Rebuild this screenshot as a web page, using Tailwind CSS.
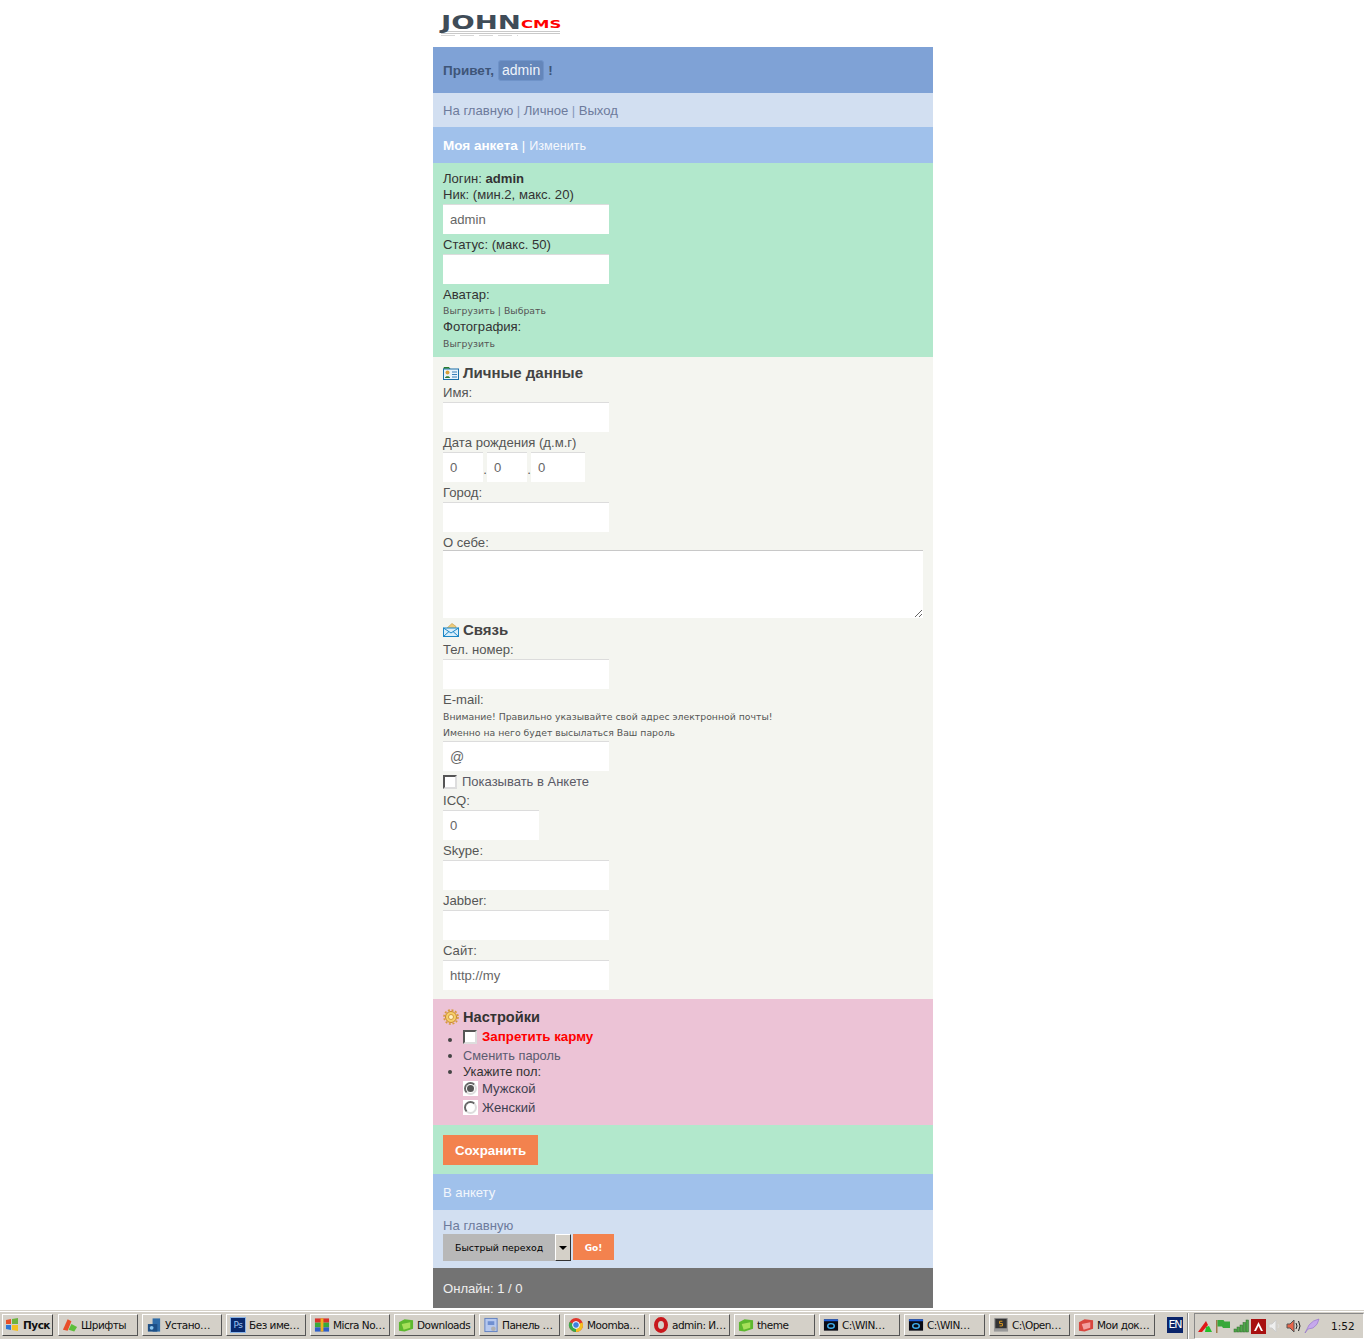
<!DOCTYPE html>
<html lang="ru">
<head>
  <meta charset="UTF-8">
  <title>JohnCMS - Моя анкета</title>
  <script src="https://cdn.jsdelivr.net/npm/@tailwindcss/browser@4"></script>
</head>
<body class="bg-white h-screen overflow-hidden flex flex-col font-['Liberation_Sans',Arial,sans-serif] text-[13.1px] leading-[16px] text-[#444]">

  <div class="flex-1 min-h-0">
    <div class="w-[500px] ml-[433px]">

      <!-- Logo -->
      <div class="h-[47px] pl-[8px] pt-[14px]">
        <div class="flex items-end h-[16px] w-[121px]">
          <span class="w-[80px] text-[20px] leading-[16px] font-bold font-['DejaVu_Sans',sans-serif] text-[#3f4c58] origin-left scale-x-[1.38]">JOHN</span>
          <span class="text-[11px] leading-[10px] font-bold font-['DejaVu_Sans',sans-serif] text-[#f00] origin-left scale-x-[1.5]">CMS</span>
        </div>
        <div class="w-[119px] h-[3px] mt-[1px] bg-[repeating-linear-gradient(to_bottom,#c9c9c9_0,#c9c9c9_1px,#fff_1px,#fff_2px)]"></div>
        <div class="w-[77px] h-[1px] mt-[1px] bg-[repeating-linear-gradient(to_right,#d6d6d6_0,#d6d6d6_14px,#fff_14px,#fff_19px)]"></div>
      </div>

      <!-- Header -->
      <div class="h-[46px] bg-[#7fa2d6] flex items-center px-[10px] text-[13.5px] font-bold text-[#3e5578]">
        <span class="pt-[2px]">Привет,</span>
        <span class="ml-[4px] h-[21px] px-[3px] flex items-center bg-[#6486ba] border border-[#6f93c9] rounded-[3px] text-[14px] font-normal text-[#eef3fb]">admin</span>
        <span class="ml-[4px] pt-[2px]">!</span>
      </div>

      <!-- Nav -->
      <div class="h-[34px] bg-[#d2dff1] flex items-center px-[10px] pt-[2px] text-[#6d7b9c]">
        На главную <span class="mx-[3.500px] text-[#8798bb]">|</span> Личное <span class="mx-[3.500px] text-[#8798bb]">|</span> Выход
      </div>

      <!-- Title -->
      <div class="h-[36px] bg-[#a0c1eb] flex items-center px-[10px] pt-[2px] text-white">
        <b class="text-[13.5px]">Моя анкета</b><span class="mx-[4px]">|</span><span class="text-[12.6px] text-[#f5f8fd]">Изменить</span>
      </div>

      <!-- Login block -->
      <div class="h-[194px] bg-[#b2e8cc] px-[10px] pt-[7px] text-[#333]">
        <div class="h-[16px] leading-[17px]">Логин: <b>admin</b></div>
        <div class="h-[16px] leading-[17px]">Ник: (мин.2, макс. 20)</div>
        <input type="text" value="admin" class="block mt-[2px] w-[166px] h-[30px] bg-white border-t border-[#dcdcdc] pl-[7px] text-[#666] outline-none">
        <div class="mt-[2px] h-[16px] leading-[17px]">Статус: (макс. 50)</div>
        <input type="text" class="block mt-[2px] w-[166px] h-[30px] bg-white border-t border-[#dcdcdc] pl-[7px] text-[#666] outline-none">
        <div class="mt-[2px] h-[16px] leading-[17px]">Аватар:</div>
        <div class="mt-[1px] text-[9.3px] font-['DejaVu_Sans',sans-serif] text-[#555]">Выгрузить | Выбрать</div>
        <div class="-mt-[1px] h-[16px] leading-[17px]">Фотография:</div>
        <div class="mt-[2px] text-[9.3px] font-['DejaVu_Sans',sans-serif] text-[#555]">Выгрузить</div>
      </div>

      <!-- Personal data -->
      <div class="h-[642px] bg-[#f4f5f0] px-[10px] pt-[7px] text-[#555]">
        <div class="flex items-center gap-[4px] h-[17px] text-[15px] font-bold text-[#444]">
          <svg width="16" height="14" viewBox="0 0 16 14">
            <path d="M1 3V1.500h5l1 1.500" fill="#5fae4a" stroke="#2b7a2e"/>
            <rect x=".5" y="3" width="15" height="10.500" fill="#eaf4fb" stroke="#1b6fa8"/>
            <circle cx="4.500" cy="6.500" r="2" fill="#d9a13a"/>
            <path d="M2 12c0-2.500 5-2.500 5 0z" fill="#2f7a32"/>
            <path d="M9 6h5M9 8.500h5M9 11h5" stroke="#3a7fb8"/>
          </svg>
          <span>Личные данные</span>
        </div>
        <div class="mt-[3px] h-[16px] leading-[17px]">Имя:</div>
        <input type="text" class="block mt-[2px] w-[166px] h-[30px] bg-white border-t border-[#dcdcdc] pl-[7px] text-[#666] outline-none">
        <div class="mt-[2px] h-[16px] leading-[17px]">Дата рождения (д.м.г)</div>
        <div class="flex items-center mt-[2px] h-[30px]">
          <input type="text" value="0" class="w-[40px] h-[30px] bg-white border-t border-[#dcdcdc] pl-[7px] text-[#666] outline-none">
          <span class="w-[4px] pt-[6px] text-center">.</span>
          <input type="text" value="0" class="w-[40px] h-[30px] bg-white border-t border-[#dcdcdc] pl-[7px] text-[#666] outline-none">
          <span class="w-[4px] pt-[6px] text-center">.</span>
          <input type="text" value="0" class="w-[54px] h-[30px] bg-white border-t border-[#dcdcdc] pl-[7px] text-[#666] outline-none">
        </div>
        <div class="mt-[2px] h-[16px] leading-[17px]">Город:</div>
        <input type="text" class="block mt-[2px] w-[166px] h-[30px] bg-white border-t border-[#dcdcdc] pl-[7px] text-[#666] outline-none">
        <div class="mt-[2px] h-[16px] leading-[17px]">О себе:</div>
        <textarea class="block w-[480px] h-[68px] bg-white border-t border-[#c8c8c8] outline-none"></textarea>

        <div class="flex items-center gap-[4px] h-[17px] mt-[3px] text-[15px] font-bold text-[#444]">
          <svg width="16" height="15" viewBox="0 0 16 15">
            <path d="M3 7 9 1.500l4 3V8L8 11z" fill="#f0cc7a" stroke="#c9a04a" stroke-width=".7"/>
            <rect x=".5" y="6" width="15" height="8.500" fill="#d8eefb" stroke="#1b86c6"/>
            <path d="m.5 6 7.500 5 7.500-5M.5 14.500l5.500-5M15.500 14.500l-5.500-5" fill="none" stroke="#1b86c6"/>
          </svg>
          <span>Связь</span>
        </div>
        <div class="mt-[3px] h-[16px] leading-[17px]">Тел. номер:</div>
        <input type="text" class="block mt-[2px] w-[166px] h-[30px] bg-white border-t border-[#dcdcdc] pl-[7px] text-[#666] outline-none">
        <div class="mt-[2px] h-[16px] leading-[17px]">E-mail:</div>
        <div class="mt-[1px] h-[16px] leading-[18px] text-[9.3px] font-['DejaVu_Sans',sans-serif] text-[#555]">Внимание! Правильно указывайте свой адрес электронной почты!</div>
        <div class="h-[16px] leading-[18px] text-[9.3px] font-['DejaVu_Sans',sans-serif] text-[#555]">Именно на него будет высылаться Ваш пароль</div>
        <input type="text" value="@" class="block mt-[1px] w-[166px] h-[30px] bg-white border-t border-[#dcdcdc] pl-[7px] text-[14px] text-[#666] outline-none">
        <label class="flex items-center gap-[5px] mt-[2px] h-[17px] leading-[17px] text-[13px] text-[#5a5a66]">
          <input type="checkbox" class="appearance-none w-[14px] h-[14px] bg-white border-2 border-t-[#555] border-l-[#555] border-r-[#ddd] border-b-[#ddd]">
          Показывать в Анкете
        </label>
        <div class="mt-[2px] h-[16px] leading-[17px]">ICQ:</div>
        <input type="text" value="0" class="block mt-[2px] w-[96px] h-[30px] bg-white border-t border-[#dcdcdc] pl-[7px] text-[#666] outline-none">
        <div class="mt-[2px] h-[16px] leading-[17px]">Skype:</div>
        <input type="text" class="block mt-[2px] w-[166px] h-[30px] bg-white border-t border-[#dcdcdc] pl-[7px] text-[#666] outline-none">
        <div class="mt-[2px] h-[16px] leading-[17px]">Jabber:</div>
        <input type="text" class="block mt-[2px] w-[166px] h-[30px] bg-white border-t border-[#dcdcdc] pl-[7px] text-[#666] outline-none">
        <div class="mt-[2px] h-[16px] leading-[17px]">Сайт:</div>
        <input type="text" value="http://my" class="block mt-[2px] w-[166px] h-[30px] bg-white border-t border-[#dcdcdc] pl-[7px] text-[#666] outline-none">
      </div>

      <!-- Settings -->
      <div class="h-[126px] bg-[#ecc3d6] px-[10px] pt-[9px] text-[#333]">
        <div class="flex items-center gap-[4px] h-[17px] text-[14.6px] font-bold">
          <svg width="16" height="16" viewBox="0 0 16 16">
            <circle cx="8" cy="8" r="5.500" fill="#f6cf6a" stroke="#c8862a" stroke-width="1"/>
            <circle cx="8" cy="8" r="7" fill="none" stroke="#d89a3a" stroke-width="1.600" stroke-dasharray="2 1.700"/>
            <circle cx="8" cy="8" r="2.500" fill="#fff3c8" stroke="#c8862a" stroke-width=".8"/>
          </svg>
          <span>Настройки</span>
        </div>
        <ul class="list-disc pl-[20px] mt-[3px] marker:text-[#444]">
          <li class="h-[19px]">
            <label class="flex items-center gap-[5px] h-[17px] leading-[17px] text-[13.3px] font-bold text-[#f00]">
              <input type="checkbox" class="appearance-none w-[14px] h-[14px] bg-white border-2 border-t-[#555] border-l-[#555] border-r-[#ddd] border-b-[#ddd]">
              Запретить карму
            </label>
          </li>
          <li class="h-[16px] leading-[17px] text-[12.8px] text-[#5b5b70]">Сменить пароль</li>
          <li class="h-[17px] leading-[17px] text-[12.9px]">Укажите пол:</li>
        </ul>
        <div class="pl-[20px] -mt-[1px]">
          <label class="flex items-center gap-[4px] h-[19px] text-[#3f3f50]">
            <span class="w-[15px] h-[15px] bg-white flex items-center justify-center"><span class="w-[13px] h-[13px] rounded-full border-2 border-t-[#666] border-l-[#666] border-r-[#ddd] border-b-[#ddd] flex items-center justify-center"><span class="w-[7px] h-[7px] rounded-full bg-[#555]"></span></span></span>
            Мужской
          </label>
          <label class="flex items-center gap-[4px] h-[19px] text-[#3f3f50]">
            <span class="w-[15px] h-[15px] bg-white flex items-center justify-center"><span class="w-[13px] h-[13px] rounded-full border-2 border-t-[#666] border-l-[#666] border-r-[#ddd] border-b-[#ddd]"></span></span>
            Женский
          </label>
        </div>
      </div>

      <!-- Save -->
      <div class="h-[49px] bg-[#b2e8cc] px-[10px] pt-[10px]">
        <button class="w-[95px] h-[30px] pt-[2px] bg-[#f3824e] text-white text-[13.3px] font-bold">Сохранить</button>
      </div>

      <!-- Back -->
      <div class="h-[36px] bg-[#a0c1eb] flex items-center px-[10px] pt-[2px] text-[#f2f6fc]">В анкету</div>

      <!-- Bottom nav -->
      <div class="h-[58px] bg-[#d2dff1] px-[10px] pt-[7px] text-[#6d7b9c]">
        <div class="h-[16px] leading-[17px]">На главную</div>
        <div class="flex items-start mt-[1px]">
          <select class="appearance-none w-[112px] h-[27px] bg-[#b8b8b8] pl-[12px] text-[9.4px] font-['DejaVu_Sans',sans-serif] text-black outline-none">
            <option>Быстрый переход</option>
          </select>
          <span class="w-[16px] h-[27px] bg-[#d4d0c8] border border-t-white border-l-white border-r-[#333] border-b-[#333] flex items-center justify-center">
            <span class="w-0 h-0 border-x-[4px] border-x-transparent border-t-[4px] border-t-black"></span>
          </span>
          <button class="ml-[2px] w-[41px] h-[26px] pt-[2px] bg-[#f3824e] text-white text-[9px] font-bold font-['DejaVu_Sans',sans-serif]">Go!</button>
        </div>
      </div>

      <!-- Footer -->
      <div class="h-[40px] bg-[#737373] flex items-center px-[10px] pt-[2px] text-[#eee]">Онлайн: 1 / 0</div>
    </div>
  </div>

  <!-- Windows taskbar -->
  <div class="h-[28px] shrink-0 bg-[#d4d0c8] border-t border-white shadow-[0_-1px_0_#d4d0c8] flex items-start pt-[2px] text-[10.5px] font-['DejaVu_Sans',sans-serif] tracking-[-0.5px] whitespace-nowrap text-[#111]">
    <button class="ml-[2px] w-[51px] h-[22px] flex items-center gap-[3px] pl-[2px] border border-t-white border-l-white border-r-[#444] border-b-[#444] font-bold">
      <svg width="15" height="14" viewBox="0 0 15 14"><path d="M1 2l5-1v5H1z" fill="#e8502a"/><path d="M7 1l6-1v6H7z" fill="#6db33f"/><path d="M1 7h5v5l-5-1z" fill="#2f78d8"/><path d="M7 7h6v6l-6-1z" fill="#f4c020"/></svg>
      Пуск
    </button>
    <div class="ml-[5px] flex gap-[4px]">
      <div class="w-[80px] h-[22px] flex items-center gap-[3px] pl-[3px] border border-t-white border-l-white border-r-[#555] border-b-[#555]">
        <svg width="16" height="16" viewBox="0 0 17 16"><path d="M1 13 6 2l4 2-4 10z" fill="#e84f2a"/><path d="M7 13l3-6 6 3-3 5z" fill="#5cbf3a"/></svg>
        <span>Шрифты</span>
      </div>
      <div class="w-[80px] h-[22px] flex items-center gap-[3px] pl-[3px] border border-t-white border-l-white border-r-[#555] border-b-[#555]">
        <svg width="16" height="16" viewBox="0 0 17 16"><rect x="7" y="1" width="8" height="14" fill="#2f6ca8"/><rect x="2" y="7" width="10" height="8" fill="#1d4f86"/><circle cx="6" cy="11" r="2" fill="#8cc6ee"/></svg>
        <span>Устано…</span>
      </div>
      <div class="w-[80px] h-[22px] flex items-center gap-[3px] pl-[3px] border border-t-white border-l-white border-r-[#555] border-b-[#555]">
        <span class="w-[16px] h-[16px] bg-[#0a2a6e] border border-[#8ab4e8] text-[#9cc6f5] text-[9px] leading-[14px] text-center">Ps</span>
        <span>Без име…</span>
      </div>
      <div class="w-[80px] h-[22px] flex items-center gap-[3px] pl-[3px] border border-t-white border-l-white border-r-[#555] border-b-[#555]">
        <svg width="16" height="16" viewBox="0 0 17 16"><rect x="1" y="1" width="15" height="4.500" fill="#d8322a"/><rect x="1" y="5.500" width="15" height="5" fill="#3aa83a"/><rect x="1" y="10.500" width="15" height="4.500" fill="#2f5fc8"/><rect x="7" y="1" width="3" height="14" fill="#f0b020"/></svg>
        <span>Micra No…</span>
      </div>
      <div class="w-[81px] h-[22px] flex items-center gap-[3px] pl-[3px] border border-t-white border-l-white border-r-[#555] border-b-[#555]">
        <svg width="16" height="16" viewBox="0 0 17 16"><path d="M1 5l6-3 9 1v9l-9 3-6-1z" fill="#5cb82e"/><path d="M4 7l9-2v6l-7 2z" fill="#a6e05a"/></svg>
        <span>Downloads</span>
      </div>
      <div class="w-[81px] h-[22px] flex items-center gap-[3px] pl-[3px] border border-t-white border-l-white border-r-[#555] border-b-[#555]">
        <svg width="16" height="16" viewBox="0 0 17 16"><rect x="2" y="1" width="13" height="14" fill="#b6c8ee" stroke="#5f7fc0"/><rect x="5" y="4" width="7" height="4" fill="#6f8fd0"/><circle cx="11" cy="12" r="2.500" fill="#b0b0b0"/></svg>
        <span>Панель …</span>
      </div>
      <div class="w-[81px] h-[22px] flex items-center gap-[3px] pl-[3px] border border-t-white border-l-white border-r-[#555] border-b-[#555]">
        <svg width="16" height="16" viewBox="0 0 16 16"><circle cx="8" cy="8" r="7" fill="#e0362c"/><path d="M8 8 14.500 5.500A7 7 0 0 1 8 15z" fill="#f4c020"/><path d="M8 8 8 15A7 7 0 0 1 1.500 5z" fill="#3aa84a"/><circle cx="8" cy="8" r="3.400" fill="#3f7fe0" stroke="#fff"/></svg>
        <span>Moomba…</span>
      </div>
      <div class="w-[81px] h-[22px] flex items-center gap-[3px] pl-[3px] border border-t-white border-l-white border-r-[#555] border-b-[#555]">
        <svg width="16" height="16" viewBox="0 0 16 16"><ellipse cx="8" cy="8" rx="5" ry="6" fill="none" stroke="#c8181c" stroke-width="4"/></svg>
        <span>admin: И…</span>
      </div>
      <div class="w-[81px] h-[22px] flex items-center gap-[3px] pl-[3px] border border-t-white border-l-white border-r-[#555] border-b-[#555]">
        <svg width="16" height="16" viewBox="0 0 17 16"><path d="M1 5l6-3 9 1v9l-9 3-6-1z" fill="#5cb82e"/><path d="M4 7l9-2v6l-7 2z" fill="#a6e05a"/></svg>
        <span>theme</span>
      </div>
      <div class="w-[81px] h-[22px] flex items-center gap-[3px] pl-[3px] border border-t-white border-l-white border-r-[#555] border-b-[#555]">
        <svg width="16" height="16" viewBox="0 0 17 16"><rect x="1" y="2" width="15" height="12" fill="#0a0a14"/><rect x="1" y="2" width="15" height="2" fill="#1f5fd8"/><ellipse cx="8.500" cy="9" rx="3.500" ry="2.500" fill="none" stroke="#3fb0f0" stroke-width="1.500"/></svg>
        <span>C:\WIN…</span>
      </div>
      <div class="w-[81px] h-[22px] flex items-center gap-[3px] pl-[3px] border border-t-white border-l-white border-r-[#555] border-b-[#555]">
        <svg width="16" height="16" viewBox="0 0 17 16"><rect x="1" y="2" width="15" height="12" fill="#0a0a14"/><rect x="1" y="2" width="15" height="2" fill="#1f5fd8"/><ellipse cx="8.500" cy="9" rx="3.500" ry="2.500" fill="none" stroke="#3fb0f0" stroke-width="1.500"/></svg>
        <span>C:\WIN…</span>
      </div>
      <div class="w-[81px] h-[22px] flex items-center gap-[3px] pl-[3px] border border-t-white border-l-white border-r-[#555] border-b-[#555]">
        <svg width="16" height="16" viewBox="0 0 17 16"><rect x="2" y="1" width="13" height="11" fill="#333" stroke="#888"/><path d="M10 4H7v2.500h3V9H7" fill="none" stroke="#e8a020"/><rect x="1" y="12" width="15" height="3" fill="#999"/></svg>
        <span>C:\Open…</span>
      </div>
      <div class="w-[81px] h-[22px] flex items-center gap-[3px] pl-[3px] border border-t-white border-l-white border-r-[#555] border-b-[#555]">
        <svg width="16" height="16" viewBox="0 0 17 16"><path d="M1 5l6-3 9 1v9l-9 3-6-1z" fill="#d8463e"/><path d="M4 7l9-2v6l-7 2z" fill="#f4a0a0"/></svg>
        <span>Мои док…</span>
      </div>
    </div>
    <span class="ml-[12px] mt-[3px] w-[16px] h-[16px] bg-[#0a246a] text-white text-[11px] leading-[16px] text-center tracking-[-1px]">EN</span>
    <span class="ml-[4px] -mt-[1px] w-[2px] h-[26px] border-x border-l-[#888] border-r-white"></span>
    <div class="ml-[5px] -mt-[1px] flex-1 h-[26px] flex items-center gap-[2px] pl-[2px] border border-t-[#888] border-l-[#888] border-r-white border-b-white">
      <svg width="16" height="16" viewBox="0 0 16 16"><path d="M1 14 9 3l2 4-6 7z" fill="#e01818"/><path d="M9 9l3-1 3 6H8z" fill="#22c02a"/></svg>
      <svg width="16" height="16" viewBox="0 0 16 16"><rect x="1" y="2" width="1.500" height="13" fill="#a0784a"/><path d="M2.500 2h6l1 1.500h5.500V10H8L7 8.500H2.500z" fill="#38a83a"/></svg>
      <svg width="16" height="16" viewBox="0 0 16 16"><g fill="#4fa84a" stroke="#2c6a2a" stroke-width=".5"><rect x="1" y="11" width="2.500" height="3"/><rect x="4" y="9" width="2.500" height="5"/><rect x="7" y="7" width="2.500" height="7"/><rect x="10" y="4.500" width="2.500" height="9.500"/><rect x="13" y="2" width="2.500" height="12"/></g></svg>
      <svg width="15" height="15" viewBox="0 0 15 15"><rect width="15" height="15" fill="#a81010"/><path d="M3 12 7.500 3 12 12h-2L7.500 7 5 12z" fill="#fff"/></svg>
      <svg width="16" height="16" viewBox="0 0 16 16"><path d="M1 6h3l4-4v12l-4-4H1z" fill="#eee" stroke="#ccc"/><path d="M10 6q2 2 0 4" fill="none" stroke="#ddd"/></svg>
      <svg width="16" height="16" viewBox="0 0 16 16"><path d="M1 6h3l4-4v12l-4-4H1z" fill="#e8664a" stroke="#555"/><path d="M10 5q2 3 0 6M12.500 3q3 5 0 10" fill="none" stroke="#222"/></svg>
      <svg width="16" height="16" viewBox="0 0 16 16"><path d="M1 15 5 7q4-5 10-6-1 6-6 9l-5 1z" fill="#c6a8ec" stroke="#8f6fc8" stroke-width=".6"/></svg>
      <span class="ml-[9px] text-[10.5px] tracking-normal">1:52</span>
    </div>
  </div>

</body>
</html>
